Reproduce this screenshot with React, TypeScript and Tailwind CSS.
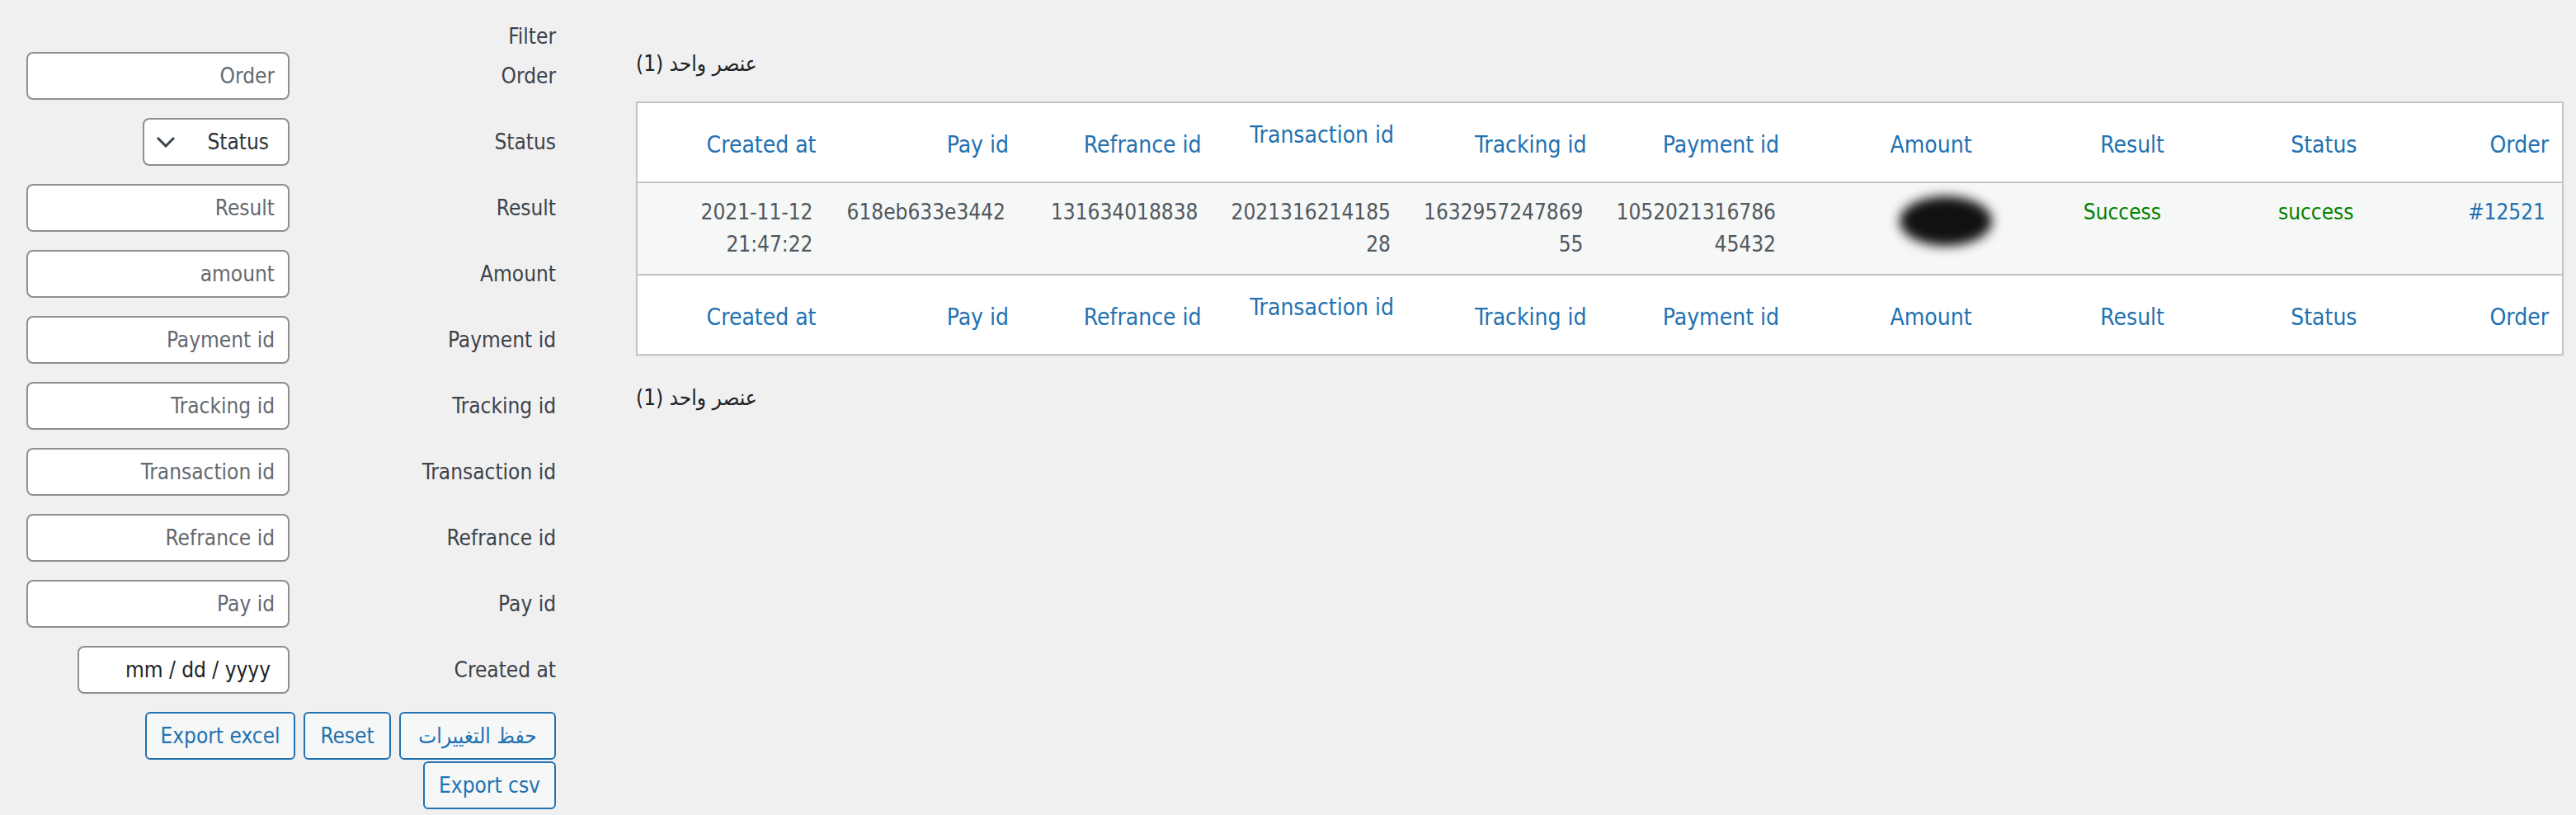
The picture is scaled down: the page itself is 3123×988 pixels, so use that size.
import React from "react";

const FONT = "[font-family:'DejaVu_Sans_Condensed','DejaVu_Sans',sans-serif] font-stretch-condensed";

const cols = [
  "Created at",
  "Pay id",
  "Refrance id",
  "Transaction id",
  "Tracking id",
  "Payment id",
  "Amount",
  "Result",
  "Status",
  "Order",
];

function TextInput({ placeholder }: { placeholder: string }) {
  return (
    <input
      readOnly
      placeholder={placeholder}
      className={`${FONT} w-[319px] h-[58px] rounded-[8px] border-2 border-[#8c8f94] bg-white pr-[16px] pl-[16px] text-right text-[26px] text-[#2c3338] placeholder:text-[#646970] outline-none`}
    />
  );
}

function StatusSelect() {
  return (
    <div className="w-[178px] h-[58px] rounded-[8px] border-2 border-[#8c8f94] bg-white flex items-center justify-between pl-[14px] pr-[23px]">
      <svg width="24" height="14" viewBox="0 0 24 14" className="shrink-0">
        <polyline points="2,2 12,12 22,2" fill="none" stroke="#3c434a" strokeWidth="3" />
      </svg>
      <span className="text-[26px] text-[#2c3338]">Status</span>
    </div>
  );
}

function DateInput() {
  return (
    <div className="w-[257px] h-[58px] rounded-[8px] border-2 border-[#8c8f94] bg-white flex items-center justify-end pr-[21px]">
      <span className="text-[26px] text-[#1d2327]">mm / dd / yyyy</span>
    </div>
  );
}

function Row({ label, children }: { label: string; children: React.ReactNode }) {
  return (
    <div className="flex items-center h-[58px]">
      <div className="w-[319px] flex justify-end">{children}</div>
      <div className="flex-1 text-right text-[26px] text-[#3c434a]">{label}</div>
    </div>
  );
}

function Btn({ w, children }: { w: string; children: React.ReactNode }) {
  return (
    <div
      className={`${w} h-[58px] rounded-[6px] border-2 border-[#2271b1] bg-[#f6f7f7] text-[#2271b1] text-[26px] flex items-center justify-center whitespace-nowrap`}
    >
      {children}
    </div>
  );
}

function HeaderRow({ border }: { border: "b" | "t" }) {
  return (
    <tr className={border === "b" ? "border-b-2 border-[#c3c4c7]" : "border-t-2 border-[#c3c4c7]"}>
      {cols.map((c) => (
        <th
          key={c}
          className="h-[97px] pt-[6px] pb-0 pr-[16px] pl-[8px] text-right align-middle font-normal text-[28px] leading-[42px] text-[#2271b1] whitespace-nowrap"
        >
          {c === "Transaction id" ? <span className="block pb-[23px]">{c}</span> : c}
        </th>
      ))}
    </tr>
  );
}

function Cell({ children, className = "" }: { children?: React.ReactNode; className?: string }) {
  return (
    <td className={`pt-[16px] pb-[16px] pr-[20px] pl-[10px] align-top text-right text-[26px] leading-[39px] whitespace-nowrap ${className}`}>
      {children}
    </td>
  );
}

export default function App() {
  return (
    <div className={`${FONT} min-h-[988px] w-full bg-[#f0f0f1] flex items-start`}>
      {/* Filter panel */}
      <div className="w-[674px] shrink-0 pl-[32px] pt-[30px] flex flex-col">
        <div className="h-[28px] leading-[28px] text-right text-[26px] text-[#3c434a]">Filter</div>
        <div className="mt-[5px] flex flex-col gap-[22px]">
          <Row label="Order"><TextInput placeholder="Order" /></Row>
          <Row label="Status"><StatusSelect /></Row>
          <Row label="Result"><TextInput placeholder="Result" /></Row>
          <Row label="Amount"><TextInput placeholder="amount" /></Row>
          <Row label="Payment id"><TextInput placeholder="Payment id" /></Row>
          <Row label="Tracking id"><TextInput placeholder="Tracking id" /></Row>
          <Row label="Transaction id"><TextInput placeholder="Transaction id" /></Row>
          <Row label="Refrance id"><TextInput placeholder="Refrance id" /></Row>
          <Row label="Pay id"><TextInput placeholder="Pay id" /></Row>
          <Row label="Created at"><DateInput /></Row>
        </div>
        <div className="mt-[22px] flex justify-end gap-[10px]">
          <Btn w="w-[182px]">Export excel</Btn>
          <Btn w="w-[106px]">Reset</Btn>
          <Btn w="w-[190px]"><span dir="rtl">حفظ التغييرات</span></Btn>
        </div>
        <div className="mt-[2px] flex justify-end">
          <Btn w="w-[161px]">Export csv</Btn>
        </div>
      </div>

      {/* Table area */}
      <div className="flex-1 ml-[97px] mr-[15px] pt-[58px] flex flex-col">
        <div className="h-[39px] leading-[39px] text-[26px] text-[#1d2327]">
          <span dir="rtl">عنصر واحد (1)</span>
        </div>
        <table className="mt-[26px] w-full table-fixed border-collapse border-2 border-[#c3c4c7] bg-white shadow-[0_2px_2px_rgba(0,0,0,0.04)]">
          <thead>
            <HeaderRow border="b" />
          </thead>
          <tbody>
            <tr className="bg-[#f6f7f7] text-[#50575e]">
              <Cell>
                <span className="block">2021-11-12</span>
                <span className="block">21:47:22</span>
              </Cell>
              <Cell>618eb633e3442</Cell>
              <Cell>131634018838</Cell>
              <Cell>
                <span className="block">2021316214185</span>
                <span className="block">28</span>
              </Cell>
              <Cell>
                <span className="block">1632957247869</span>
                <span className="block">55</span>
              </Cell>
              <Cell>
                <span className="block">1052021316786</span>
                <span className="block">45432</span>
              </Cell>
              <Cell>
                <div className="flex justify-end mr-[-28px] mt-[0px]">
                  <div className="w-[112px] h-[60px] rounded-[50%] bg-[#111] blur-[7px]" />
                </div>
              </Cell>
              <Cell className="text-[#008000]">Success</Cell>
              <Cell className="text-[#008000]">success</Cell>
              <Cell className="text-[#2271b1]">#12521</Cell>
            </tr>
          </tbody>
          <tfoot>
            <HeaderRow border="t" />
          </tfoot>
        </table>
        <div className="mt-[32px] h-[39px] leading-[39px] text-[26px] text-[#1d2327]">
          <span dir="rtl">عنصر واحد (1)</span>
        </div>
      </div>
    </div>
  );
}
